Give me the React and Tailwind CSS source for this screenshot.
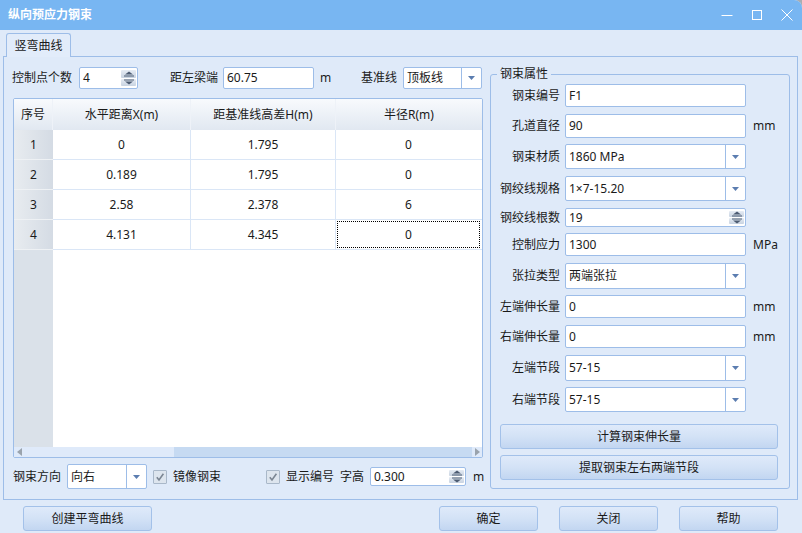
import React from 'react';

function Arrow() {
  return (
    <svg width="7" height="4" viewBox="0 0 7 4">
      <path d="M0 0h7L3.5 4z" fill="#5b7db0" />
    </svg>
  );
}

function Combo({ className, value }) {
  return (
    <div className={`flex shrink-0 bg-white border border-[#9dbde8] rounded-[2px] ${className}`}>
      <div className="flex-1 flex items-center pl-[3px] whitespace-nowrap">{value}</div>
      <div className="w-[20px] border-l border-[#9dbde8] flex items-center justify-center">
        <Arrow />
      </div>
    </div>
  );
}

function Spin({ className, value }) {
  return (
    <div className={`flex shrink-0 bg-white border border-[#9dbde8] rounded-[2px] ${className}`}>
      <div className="flex-1 flex items-center pl-[3px]">{value}</div>
      <div className="w-[16px] flex flex-col py-[2px] pr-[1px] gap-[1px]">
        <div className="flex-1 bg-gradient-to-b from-[#e6ecf4] to-[#c8d3e1] rounded-[1px] flex items-center justify-center">
          <svg width="10" height="6" viewBox="0 0 10 6">
            <path d="M1 3.5L5 0.5L9 3.5z" fill="#4d5c72" />
            <rect x="0" y="4.5" width="10" height="1" fill="#4d5c72" />
          </svg>
        </div>
        <div className="flex-1 bg-gradient-to-b from-[#e6ecf4] to-[#c8d3e1] rounded-[1px] flex items-center justify-center">
          <svg width="10" height="6" viewBox="0 0 10 6">
            <rect x="0" y="0.5" width="10" height="1" fill="#4d5c72" />
            <path d="M1 2.5L5 5.5L9 2.5z" fill="#4d5c72" />
          </svg>
        </div>
      </div>
    </div>
  );
}

function Input({ className, value }) {
  return (
    <div className={`flex shrink-0 items-center bg-white border border-[#9dbde8] rounded-[2px] pl-[3px] ${className}`}>
      {value}
    </div>
  );
}

function Check() {
  return (
    <div className="w-[14px] h-[14px] shrink-0 border border-[#a9b8c9] bg-[#dde5ee] rounded-[1px] flex items-center justify-center">
      <svg width="10" height="10" viewBox="0 0 10 10">
        <path d="M1.8 5.2L4 8L8.4 1.8" stroke="#7b8693" strokeWidth="1.6" fill="none" />
      </svg>
    </div>
  );
}

function Btn({ className, children }) {
  return (
    <div
      className={`flex shrink-0 items-center justify-center border border-[#a3c1e9] rounded-[3px] bg-gradient-to-b from-[#dfeafa] via-[#d3e2f6] to-[#c2d6f1] ${className}`}
    >
      {children}
    </div>
  );
}

const rows = [
  ['1', '0', '1.795', '0'],
  ['2', '0.189', '1.795', '0'],
  ['3', '2.58', '2.378', '6'],
  ['4', '4.131', '4.345', '0'],
];

const props = [
  { label: '钢束编号', kind: 'input', value: 'F1', cls: 'mt-[3px] h-[23px]' },
  { label: '孔道直径', kind: 'input', value: '90', unit: 'mm', cls: 'mt-[7px] h-[24px]' },
  { label: '钢束材质', kind: 'combo', value: '1860 MPa', cls: 'mt-[6px] h-[25px]' },
  { label: '钢绞线规格', kind: 'combo', value: '1×7-15.20', cls: 'mt-[7px] h-[25px]' },
  { label: '钢绞线根数', kind: 'spin', value: '19', cls: 'mt-[7px] h-[19px]' },
  { label: '控制应力', kind: 'input', value: '1300', unit: 'MPa', cls: 'mt-[6px] h-[23px]' },
  { label: '张拉类型', kind: 'combo', value: '两端张拉', cls: 'mt-[7px] h-[26px]' },
  { label: '左端伸长量', kind: 'input', value: '0', unit: 'mm', cls: 'mt-[6px] h-[23px]' },
  { label: '右端伸长量', kind: 'input', value: '0', unit: 'mm', cls: 'mt-[7px] h-[23px]' },
  { label: '左端节段', kind: 'combo', value: '57-15', cls: 'mt-[7px] h-[26px]' },
  { label: '右端节段', kind: 'combo', value: '57-15', cls: 'mt-[6px] h-[25px]' },
];

export default function App() {
  return (
    <div className="w-[802px] h-[533px] bg-[#a9adb3] overflow-hidden font-['Noto_Sans','Noto_Sans_CJK_SC',sans-serif] text-[12px] text-[#1a1a1a] leading-none whitespace-nowrap">
      <div className="w-full h-full bg-[#dfeaf9] rounded-tr-[8px] flex flex-col overflow-hidden">
        {/* title bar */}
        <div className="h-[30px] bg-[#78b6f2] flex items-center shrink-0">
          <div className="pl-[8px] text-white font-bold text-[12px] flex-1">纵向预应力钢束</div>
          <div className="flex h-full">
            <div className="w-[30px] flex items-center justify-center">
              <svg width="12" height="12" viewBox="0 0 12 12">
                <path d="M0.5 6.5h11" stroke="white" strokeWidth="1" />
              </svg>
            </div>
            <div className="w-[30px] flex items-center justify-center">
              <svg width="12" height="12" viewBox="0 0 12 12">
                <rect x="1.5" y="1.5" width="9" height="9" stroke="white" strokeWidth="1" fill="none" />
              </svg>
            </div>
            <div className="w-[30px] flex items-center justify-center">
              <svg width="12" height="12" viewBox="0 0 12 12">
                <path d="M0.5 0.5L11.5 11.5M11.5 0.5L0.5 11.5" stroke="white" strokeWidth="1" />
              </svg>
            </div>
          </div>
        </div>

        {/* tab strip */}
        <div className="pt-[3px] pl-[6px] h-[26px] shrink-0 flex">
          <div className="relative z-10 w-[65px] h-[24px] border border-b-0 border-[#9dbde8] rounded-t-[3px] bg-[#e2ecfa] flex items-center justify-center">
            竖弯曲线
          </div>
        </div>

        {/* tab panel */}
        <div className="ml-[3px] mr-[4px] h-[444px] shrink-0 border border-[#9dbde8] flex pl-[9px] pr-[6px] pt-[10px]">
          {/* left column */}
          <div className="w-[470px] shrink-0 flex flex-col">
            <div className="h-[22px] flex items-center">
              <span className="w-[60px] shrink-0 -ml-[1px]">控制点个数</span>
              <Spin className="ml-[7px] w-[59px] h-[22px]" value="4" />
              <span className="ml-[32px] w-[48px] shrink-0">距左梁端</span>
              <Input className="ml-[5px] w-[91px] h-[22px]" value="60.75" />
              <span className="ml-[6px] w-[41px] shrink-0">m</span>
              <span className="w-[36px] shrink-0">基准线</span>
              <Combo className="ml-[6px] w-[79px] h-[22px]" value="顶板线" />
            </div>

            {/* grid */}
            <div className="mt-[9px] h-[360px] border border-[#9dbde8] rounded-[2px] bg-white flex flex-col overflow-hidden">
              <div className="h-[31px] flex shrink-0 bg-gradient-to-b from-[#f8fafd] to-[#e1e8f1]">
                <div className="w-[39px] flex items-center justify-center border-r border-[#eef2f8]">序号</div>
                <div className="w-[138px] flex items-center justify-center border-r border-[#eef2f8]">水平距离X(m)</div>
                <div className="w-[145px] flex items-center justify-center border-r border-[#eef2f8]">距基准线高差H(m)</div>
                <div className="w-[146px] flex items-center justify-center">半径R(m)</div>
              </div>
              {rows.map((r, i) => (
                <div key={r[0]} className="h-[30px] flex shrink-0">
                  <div className="w-[39px] flex items-center justify-center bg-gradient-to-r from-[#e8ecf0] to-[#d4dbe4] border-b border-[#eef1f4]">
                    {r[0]}
                  </div>
                  <div className="w-[138px] flex items-center justify-center border-r border-b border-[#dae6f6]">{r[1]}</div>
                  <div className="w-[145px] flex items-center justify-center border-r border-b border-[#dae6f6]">{r[2]}</div>
                  <div className="w-[146px] flex border-b border-[#dae6f6] p-[1px] pr-[2px]">
                    {i === 3 ? (
                      <div className="flex-1 border border-dotted border-black flex items-center justify-center">{r[3]}</div>
                    ) : (
                      <div className="flex-1 flex items-center justify-center">{r[3]}</div>
                    )}
                  </div>
                </div>
              ))}
              <div className="flex-1 flex">
                <div className="w-[39px] bg-[#dae1e9]" />
                <div className="flex-1" />
              </div>
              <div className="h-[10px] flex shrink-0 bg-[#dfeafa]">
                <div className="w-[10px] flex items-center justify-center">
                  <svg width="5" height="8" viewBox="0 0 5 8">
                    <path d="M5 0v8L0 4z" fill="#9aa3ad" />
                  </svg>
                </div>
                <div className="w-[150px]" />
                <div className="w-[298px] bg-[#c6daf2]" />
                <div className="flex-1 flex items-center justify-center">
                  <svg width="5" height="8" viewBox="0 0 5 8">
                    <path d="M0 0v8L5 4z" fill="#9aa3ad" />
                  </svg>
                </div>
              </div>
            </div>

            <div className="mt-[6px] h-[25px] flex items-center">
              <span className="w-[48px] shrink-0">钢束方向</span>
              <Combo className="ml-[6px] w-[80px] h-[25px]" value="向右" />
              <div className="ml-[6px]">
                <Check />
              </div>
              <span className="ml-[6px] w-[48px] shrink-0">镜像钢束</span>
              <div className="ml-[45px]">
                <Check />
              </div>
              <span className="ml-[6px] w-[48px] shrink-0">显示编号</span>
              <span className="ml-[6px] w-[24px] shrink-0">字高</span>
              <Spin className="ml-[6px] w-[96px] h-[19px]" value="0.300" />
              <span className="ml-[7px] shrink-0">m</span>
            </div>
          </div>

          {/* right group */}
          <fieldset className="ml-[7px] w-[300px] h-[422px] shrink-0 border border-[#9dbde8] rounded-[3px] flex flex-col">
            <legend className="ml-[6px] px-[3px] leading-[14px]">钢束属性</legend>
            {props.map((p) => (
              <div key={p.label} className={`flex items-center ${p.cls}`}>
                <span className="w-[69px] shrink-0 text-right">{p.label}</span>
                {p.kind === 'input' && <Input className="ml-[5px] w-[181px] h-full" value={p.value} />}
                {p.kind === 'combo' && <Combo className="ml-[5px] w-[181px] h-full" value={p.value} />}
                {p.kind === 'spin' && <Spin className="ml-[5px] w-[181px] h-full" value={p.value} />}
                {p.unit && <span className="ml-[7px]">{p.unit}</span>}
              </div>
            ))}
            <Btn className="mt-[12px] ml-[9px] w-[278px] h-[25px]">计算钢束伸长量</Btn>
            <Btn className="mt-[6px] ml-[9px] w-[278px] h-[25px]">提取钢束左右两端节段</Btn>
          </fieldset>
        </div>

        {/* bottom buttons */}
        <div className="mt-[6px] flex h-[25px]">
          <Btn className="ml-[23px] w-[129px]">创建平弯曲线</Btn>
          <Btn className="ml-[287px] w-[99px]">确定</Btn>
          <Btn className="ml-[21px] w-[99px]">关闭</Btn>
          <Btn className="ml-[21px] w-[99px]">帮助</Btn>
        </div>
      </div>
    </div>
  );
}
